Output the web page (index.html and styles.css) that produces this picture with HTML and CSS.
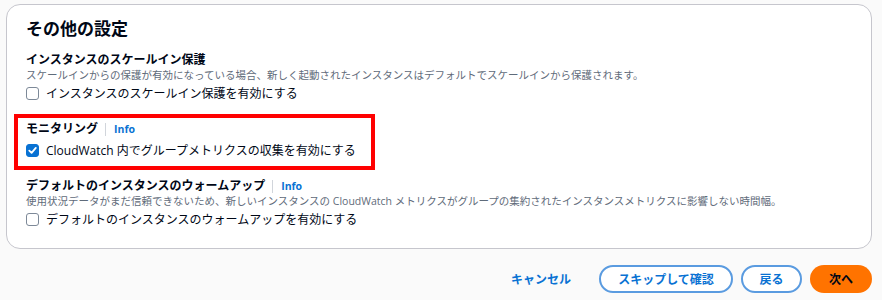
FILE: index.html
```html
<!doctype html>
<html lang="ja">
<head>
    <meta charset="UTF-8">
    <title>その他の設定</title>
    <link rel="stylesheet" href="styles.css">
</head>
<body>
    <div class="page">
        <div class="card">
            <h2 class="card-title">その他の設定</h2>

            <div class="field">
                <div class="field-label">インスタンスのスケールイン保護</div>
                <div class="field-desc">スケールインからの保護が有効になっている場合、新しく起動されたインスタンスはデフォルトでスケールインから保護されます。</div>
                <label class="check">
                    <span class="box"></span>
                    <span>インスタンスのスケールイン保護を有効にする</span>
                </label>
            </div>

            <!-- 赤枠で囲まれた部分 -->
            <div class="field is-marked">
                <div class="field-label">モニタリング<span class="sep"></span><a class="info">Info</a></div>
                <label class="check check-tight">
                    <span class="box is-checked">
                        <svg width="9" height="9" viewBox="0 0 9 9"><path d="M1.3 4.6 L3.6 6.9 L7.8 1.9" fill="none" stroke="#fff" stroke-width="1.8" stroke-linecap="round" stroke-linejoin="round"/></svg>
                    </span>
                    <span>CloudWatch 内でグループメトリクスの収集を有効にする</span>
                </label>
            </div>

            <div class="field">
                <div class="field-label">デフォルトのインスタンスのウォームアップ<span class="sep"></span><a class="info">Info</a></div>
                <div class="field-desc">使用状況データがまだ信頼できないため、新しいインスタンスの CloudWatch メトリクスがグループの集約されたインスタンスメトリクスに影響しない時間幅。</div>
                <label class="check">
                    <span class="box"></span>
                    <span>デフォルトのインスタンスのウォームアップを有効にする</span>
                </label>
            </div>
        </div>

        <div class="actions">
            <button class="btn btn-link">キャンセル</button>
            <button class="btn btn-normal btn-skip">スキップして確認</button>
            <button class="btn btn-normal btn-back">戻る</button>
            <button class="btn btn-primary">次へ</button>
        </div>
    </div>
</body>
</html>
```

FILE: styles.css
```css
html,body{
    margin: 0;
    padding: 0;
    background: #fafafa;
    font-family: "Open Sans", "Noto Sans CJK JP", sans-serif;
    color: #000716;
}
.page{
    padding: 4px 10px 0 6px;
}
.card{
    background: #fff;
    border: 1px solid #c6c6cd;
    border-radius: 14px;
    padding: 12px 19px 19px;
}
.card-title{
    margin: 0 0 11px;
    font-size: 17px;
    line-height: 24px;
    font-weight: 700;
}
.field + .field{
    margin-top: 18px;
}
.field-label{
    display: flex;
    align-items: center;
    font-size: 12px;
    line-height: 16px;
    font-weight: 700;
}
.sep{
    display: inline-block;
    width: 1px;
    height: 13px;
    background: #d1d5db;
    margin: 0 8px 0 7px;
}
.info{
    color: #0972d3;
    font-size: 10.5px;
    font-weight: 700;
}
.field-desc{
    font-size: 10.5px;
    line-height: 15px;
    color: #5f6b7a;
}
.check{
    display: flex;
    align-items: center;
    height: 20px;
    font-size: 12px;
    gap: 7px;
}
.check-tight{
    margin-top: 3px;
}
.box{
    box-sizing: border-box;
    width: 13px;
    height: 13px;
    border: 1.5px solid #7d8998;
    border-radius: 3px;
    display: flex;
    align-items: center;
    justify-content: center;
}
.box.is-checked{
    background: #0972d3;
    border-color: #0972d3;
}
.field.is-marked{
    border: 4px solid #f00;
    width: fit-content;
    margin: 11px 0 0 -12px;
    padding: 3px 15px 6px 8px;
}
.field.is-marked + .field{
    margin-top: 8px;
}
.actions{
    display: flex;
    justify-content: flex-end;
    align-items: center;
    margin-top: 16px;
    gap: 8px;
}
.btn{
    box-sizing: border-box;
    height: 28px;
    border-radius: 14px;
    font-family: inherit;
    font-size: 12px;
    font-weight: 700;
    padding: 0;
    white-space: nowrap;
    cursor: pointer;
}
.btn-link{
    border: none;
    background: none;
    color: #0972d3;
    padding: 0 14px;
    margin-right: 6px;
}
.btn-normal{
    background: #fff;
    border: 2px solid #5a9be0;
    color: #0972d3;
}
.btn-skip{
    width: 134px;
}
.btn-back{
    width: 61px;
}
.btn-primary{
    background: #ff7300;
    border: none;
    color: #000716;
    width: 62px;
}
```
